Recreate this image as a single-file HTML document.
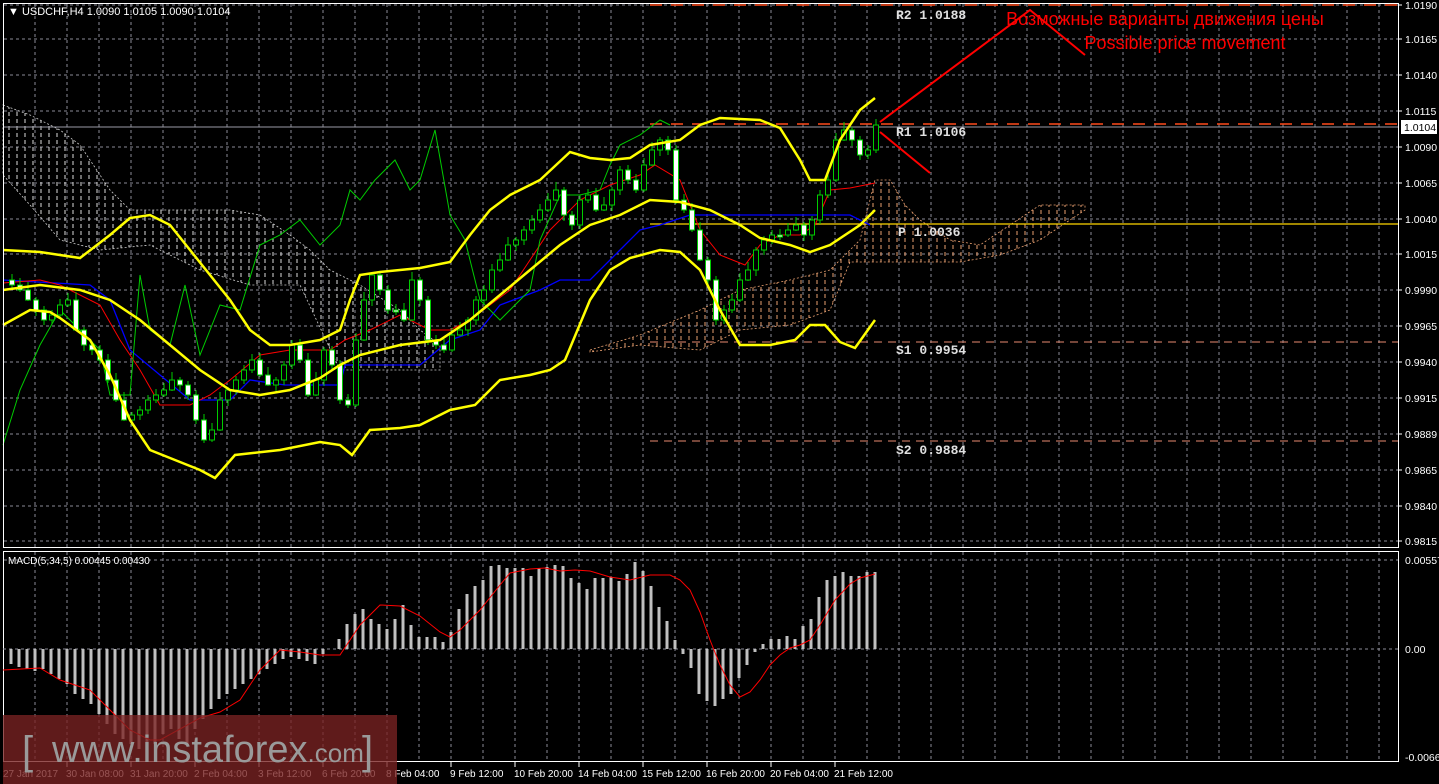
<!DOCTYPE html>
<html><head><meta charset="utf-8"><style>
html,body{margin:0;padding:0;background:#000;width:1439px;height:784px;overflow:hidden}
svg{display:block}
text{font-family:"Liberation Sans",sans-serif}
text.mono{font-family:"Liberation Mono",monospace}
</style></head><body>
<svg id="s" width="1439" height="784" viewBox="0 0 1439 784" xmlns="http://www.w3.org/2000/svg">
<defs>
<pattern id="pw" width="8" height="7" patternUnits="userSpaceOnUse"><line x1="1" y1="0" x2="1" y2="4" stroke="#ddd" stroke-width="1"/></pattern>
<pattern id="po" width="8" height="7" patternUnits="userSpaceOnUse"><line x1="1" y1="0" x2="1" y2="4" stroke="#e9a070" stroke-width="1"/></pattern>
</defs>
<g id="grid" stroke="#8a8a96" stroke-dasharray="3,3" stroke-width="1"></g>
<polygon fill="url(#pw)" stroke="#ccc" stroke-dasharray="2,2" stroke-width="0.8" points="3,105 30,115 60,130 80,145 110,190 130,210 230,210 260,215 290,235 310,250 330,270 360,285 400,310 420,330 440,345 440,370 400,370 340,370 300,285 250,285 200,270 150,245 100,250 60,240 30,205 3,175"/>
<polygon fill="url(#po)" stroke="#e9a070" stroke-dasharray="2,2" stroke-width="0.8" points="590,350 640,335 700,310 740,290 790,280 830,270 860,240 875,180 890,180 905,205 920,220 950,240 980,245 1010,225 1040,205 1085,205 1085,210 1040,240 1000,255 960,262 900,262 850,262 830,310 790,325 740,330 700,350 640,345 590,352"/>
<line x1="650" y1="5" x2="1398" y2="5" stroke="#ff4a1a" stroke-width="1.5" stroke-dasharray="12,9"/>
<line x1="650" y1="124" x2="1398" y2="124" stroke="#ff4a1a" stroke-width="1.5" stroke-dasharray="12,9"/>
<line x1="3" y1="127" x2="1398" y2="127" stroke="#9a9aa6" stroke-width="1"/>
<line x1="650" y1="224" x2="1398" y2="224" stroke="#ffd700" stroke-width="1.3"/>
<line x1="650" y1="342" x2="1398" y2="342" stroke="#e88a70" stroke-width="1" stroke-dasharray="8,6"/>
<line x1="650" y1="441" x2="1398" y2="441" stroke="#e88a70" stroke-width="1" stroke-dasharray="8,6"/>
<polyline fill="none" stroke="#0000ff" stroke-width="1.3" points="3,280 90,285 110,300 130,350 190,400 230,400 250,380 285,385 340,385 345,365 420,365 450,340 480,330 500,305 540,290 560,280 590,280 620,250 640,230 660,225 690,215 850,215 870,225"/>
<polyline fill="none" stroke="#ff0000" stroke-width="1" points="3,283 40,280 60,285 100,305 120,340 140,370 160,405 190,405 210,395 230,380 260,355 290,350 330,350 345,340 370,330 400,315 430,330 450,330 470,320 490,305 510,290 530,260 550,230 580,200 610,185 640,175 655,165 680,180 700,230 720,255 745,265 760,245 780,235 800,235 815,225 830,190 850,188 865,185 875,183"/>
<polyline fill="none" stroke="#00cc00" stroke-width="1" points="3,445 20,390 40,345 60,310 80,330 100,350 110,395 130,395 140,275 150,330 170,345 185,285 200,355 220,305 240,310 260,245 280,235 300,220 320,245 340,225 350,190 360,200 375,180 395,160 410,190 420,180 435,130 450,215 465,240 480,300 500,320 530,290 540,240 560,195 580,195 600,190 610,165 620,145 640,135 660,120 670,125"/>
<g id="candles"></g>
<polyline fill="none" stroke="#ffff00" stroke-width="2.5" points="3,250 40,252 80,258 110,235 130,218 150,215 170,225 190,250 210,275 230,300 250,330 270,345 290,345 320,340 340,330 350,300 360,275 380,272 420,268 450,262 470,235 490,210 510,195 540,180 570,152 590,158 610,160 630,158 650,145 680,140 700,125 720,118 760,120 780,128 800,160 810,180 825,180 840,140 860,110 875,98"/>
<polyline fill="none" stroke="#ffff00" stroke-width="2.5" points="3,290 40,285 80,290 110,300 140,320 170,345 200,370 230,390 260,395 290,390 320,378 340,365 360,355 400,345 440,340 470,320 500,295 530,270 560,245 590,225 620,215 650,200 680,202 710,210 740,225 760,238 790,245 810,252 830,245 860,225 875,210"/>
<polyline fill="none" stroke="#ffff00" stroke-width="2.5" points="3,325 30,310 50,312 60,318 90,340 110,375 130,420 150,450 180,462 200,470 215,478 235,455 280,450 320,442 340,445 352,455 370,430 400,428 420,425 450,410 475,405 500,380 530,375 550,370 565,360 590,300 610,270 630,258 660,250 680,252 700,270 720,310 740,345 770,345 795,340 810,325 825,325 840,342 855,348 875,320"/>
<polyline fill="none" stroke="#ff0000" stroke-width="2" points="880,122 1030,10 1085,55"/>
<line x1="880" y1="132" x2="930" y2="173" stroke="#ff0000" stroke-width="2"/>
<text x="1165" y="25" fill="#ff0000" font-size="18" text-anchor="middle">Возможные варианты движения цены</text>
<text x="1185" y="49" fill="#ff0000" font-size="18" text-anchor="middle">Possible price movement</text>
<g font-size="13" fill="#e0e0e0" font-weight="bold">
<text class="mono" x="896" y="19">R2 1.0188</text>
<text class="mono" x="896" y="136">R1 1.0106</text>
<text class="mono" x="898" y="236">P 1.0036</text>
<text class="mono" x="896" y="354">S1 0.9954</text>
<text class="mono" x="896" y="454">S2 0.9884</text>
</g>
<rect x="3.5" y="3.5" width="1395" height="544" fill="none" stroke="#fff" stroke-width="1"/>
<rect x="3.5" y="551.5" width="1395" height="210" fill="none" stroke="#fff" stroke-width="1"/>
<text x="8" y="15" fill="#fff" font-size="11">▼ USDCHF,H4  1.0090 1.0105 1.0090 1.0104</text>
<text x="8" y="564" fill="#fff" font-size="10">MACD(5,34,5) 0.00445 0.00430</text>
<line x1="3" y1="649" x2="1398" y2="649" stroke="#8a8a96" stroke-dasharray="3,3"/>
<g id="macd" fill="#c0c0c0"></g>
<polyline fill="none" stroke="#ff0000" stroke-width="1" points="3,670 40,668 60,680 90,690 110,710 130,730 150,740 160,740 200,718 220,712 240,700 260,670 280,650 300,652 320,655 340,655 360,625 380,605 400,606 420,616 440,632 450,637 460,630 480,610 500,585 510,573 530,569 545,568 560,571 575,570 590,571 610,577 630,580 650,575 670,575 680,580 690,590 700,612 710,640 720,665 730,685 740,697 750,692 760,680 770,665 780,655 790,648 800,645 810,640 820,625 835,600 850,584 860,578 875,574"/>
<g id="axis" font-size="10.5" fill="#fff"></g>
<rect x="1401" y="120" width="36" height="14" fill="#fff"/>
<text x="1404" y="131" fill="#000" font-size="10.5">1.0104</text>
<rect x="3" y="715" width="394" height="69" fill="#7a2222" fill-opacity="0.78"/>
<text x="22" y="764" fill="#9a9a9a" font-size="40">[</text>
<text x="52" y="762" fill="#9a9a9a" font-size="38">www.instaforex<tspan font-size="26">.com</tspan></text>
<text x="362" y="764" fill="#9a9a9a" font-size="40">]</text>
</svg>
<script>
(function(){
var NS="http://www.w3.org/2000/svg";
function el(p,t,a){var e=document.createElementNS(NS,t);for(var k in a)e.setAttribute(k,a[k]);p.appendChild(e);return e;}
var g=document.getElementById('grid');
for(var x=35;x<1398;x+=32){el(g,'line',{x1:x,y1:4,x2:x,y2:547});el(g,'line',{x1:x,y1:552,x2:x,y2:761});}
var ys=[5,39,75,111,147,183,219,254,290,326,362,398,434,470,506,541];
var lb=["1.0190","1.0165","1.0140","1.0115","1.0090","1.0065","1.0040","1.0015","0.9990","0.9965","0.9940","0.9915","0.9889","0.9865","0.9840","0.9815"];
ys.forEach(function(y){el(g,'line',{x1:4,y1:y,x2:1398,y2:y});});
el(g,'line',{x1:4,y1:560,x2:1398,y2:560});
var ax=document.getElementById('axis');
ys.forEach(function(y,i){el(ax,'line',{x1:1398,y1:y,x2:1402,y2:y,stroke:'#fff'});var t=el(ax,'text',{x:1405,y:y+4});t.textContent=lb[i];});
[[560,"0.00557"],[649,"0.00"],[757,"-0.0066"]].forEach(function(a){var t=el(ax,'text',{x:1405,y:a[0]+4});t.textContent=a[1];});
var dl=["27 Jan 2017","30 Jan 08:00","31 Jan 20:00","2 Feb 04:00","3 Feb 12:00","6 Feb 20:00","8 Feb 04:00","9 Feb 12:00","10 Feb 20:00","14 Feb 04:00","15 Feb 12:00","16 Feb 20:00","20 Feb 04:00","21 Feb 12:00"];
dl.forEach(function(s,i){var x=i==0?3:2+64*i;var t=el(ax,'text',{x:x,y:777,'font-size':'10'});t.textContent=s;if(i>0)el(ax,'line',{x1:x+1,y1:762,x2:x+1,y2:767,stroke:'#fff'});});
var cl=[265,270,280,285,290,300,310,320,315,305,300,330,345,350,360,380,400,420,415,410,400,395,390,380,385,395,420,440,430,400,390,380,370,360,375,385,380,365,345,360,395,380,350,365,400,405,340,300,275,290,310,310,320,280,300,340,345,350,335,330,320,300,290,270,260,245,240,230,220,210,200,190,215,225,200,195,210,205,190,170,180,190,165,150,140,150,200,210,230,260,280,320,310,300,280,270,250,240,235,235,230,225,235,220,195,180,140,130,140,155,150,125];
var cg=document.getElementById('candles');var n=cl.length;
for(var i=1;i<n;i++){var cx=876-8*(n-1-i);if(cx<5)continue;var o=cl[i-1],c=cl[i];var tp=Math.min(o,c),bt=Math.max(o,c);if(bt-tp<2)bt=tp+2;
var w=3+((i*7)%6);el(cg,'line',{x1:cx,y1:tp-w,x2:cx,y2:bt+(9-w),stroke:'#00cc00'});
el(cg,'rect',{x:cx-2.5,y:tp,width:5,height:bt-tp,fill:(c<o?'#000':'#fff'),stroke:'#00cc00','stroke-width':1});}
var mv=[-12,-15,-18,-20,-22,-20,-25,-30,-35,-45,-50,-55,-65,-75,-85,-90,-95,-100,-100,-95,-85,-80,-90,-95,-80,-70,-60,-50,-45,-40,-35,-30,-25,-20,-15,-10,-8,-10,-12,-15,-5,0,10,25,35,40,30,25,20,30,
44,24,12,12,12,7,17,40,55,63,69,83,84,81,81,81,73,81,82,84,83,71,66,60,71,71,72,68,75,87,78,63,42,28,9,-5,-19,-45,-52,-57,-50,-45,-29,-16,-3,5,10,10,13,10,23,30,52,69,73,77,73,73,77,77];
var mg=document.getElementById('macd');var m=mv.length;
for(var i=0;i<m;i++){var mx=875-8*(m-1-i);if(mx<5)continue;var h=mv[i];if(h>=0)el(mg,'rect',{x:mx-1.5,y:649-h,width:3,height:h});else el(mg,'rect',{x:mx-1.5,y:649,width:3,height:-h});}
})();
</script>
</body></html>
